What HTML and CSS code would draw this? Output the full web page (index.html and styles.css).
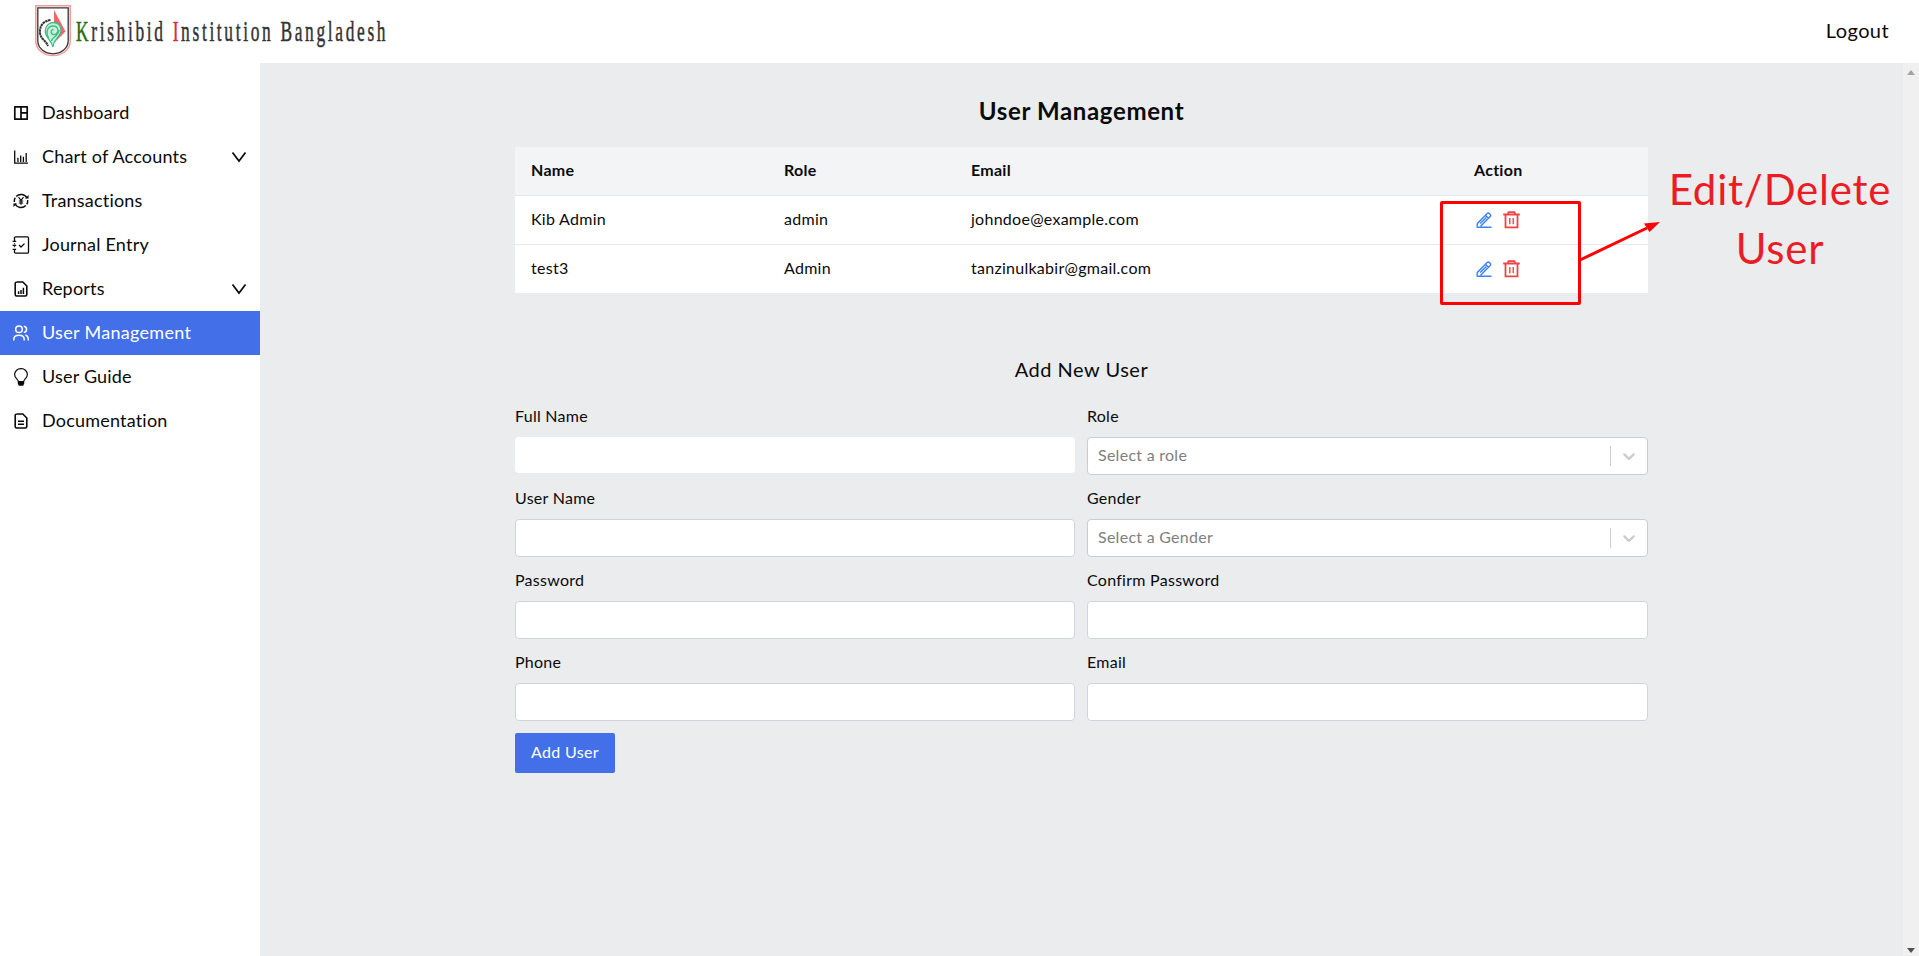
FILE: index.html
```
<!DOCTYPE html>
<html lang="en">
<head>
<meta charset="utf-8">
<title>User Management</title>
<link rel="stylesheet" href="styles.css">
</head>
<body>
<svg class="defs" aria-hidden="true">
  <symbol id="pen" viewBox="0 0 16 16"><g fill="none" stroke="currentColor" stroke-width="1.400"><path d="M.6 15.200h14.900M1 14.600l.4-3.200L11.200 1.600a1.500 1.500 0 0 1 2.100 0l.9.9a1.500 1.500 0 0 1 0 2.100L4.600 14.200M9.500 3.300l2.900 2.900M4.200 11.600l6.200-6.200"/></g></symbol>
  <symbol id="trash" viewBox="0 0 17 18"><g fill="none" stroke="currentColor" stroke-width="1.800"><path d="M.2 3.500h16.600M2.500 3.500v12.900h12V3.500M4.900 3.300l.6-2.200h6l.6 2.200"/><path d="M6.800 7v6.200M10.200 7v6.200" stroke-width="1.400"/></g></symbol>
  <symbol id="chev" viewBox="0 0 16 12"><path d="M1.500 1.500 8 10l6.500-8.500" fill="none" stroke="currentColor" stroke-width="1.700"/></symbol>
  <symbol id="select-chev" viewBox="0 0 20 20"><path d="M4.516 7.548c.436-.446 1.043-.481 1.576 0L10 11.295l3.908-3.747c.533-.481 1.141-.446 1.574 0 .436.445.408 1.197 0 1.615-.406.418-4.695 4.502-4.695 4.502a1.095 1.095 0 0 1-1.576 0S4.924 9.581 4.516 9.163s-.436-1.170 0-1.615z" fill="currentColor"/></symbol>
</svg>

<header class="topbar">
  <div class="brand">
    <svg class="crest" width="36" height="52" viewBox="0 0 36 52" fill="none">
      <path d="M.8.800h34.400V36c0 8.500-8 14.600-17.200 14.600S.800 44.500.800 36z" stroke="#f59a9a" stroke-width="1.500"/>
      <path d="M2.800 2.800h30.400v33c0 7.500-7 13-15.200 13s-15.200-5.500-15.200-13z" stroke="#333" stroke-width="1.300"/>
      <path d="M19 5l11.500 21.500L19 38z" fill="#f0666a"/>
      <path d="M17.800 42C16.500 35 10.300 33 10.300 26c0-5 3.500-8.500 8-8.500s7.700 3 7.700 7.500c0 7-7 8-8.200 17z" fill="#c9f0dd" stroke="#3dbb83" stroke-width="1.300"/>
      <path d="M13.500 33c-3-5-1.500-12 4.500-12 6 0 6.500 7 1.500 8.500-4 .5-4.500-5-1-5M16.500 36c0-4 7.500-5 7.500-11" stroke="#3dbb83" stroke-width="1.300"/>
      <path d="M15.500 15C8 16 4.500 21 5 28c.6 6 5.500 7 8 13" stroke="#333" stroke-width="2" stroke-dasharray="2.500 .5"/>
    </svg>
    <div class="wordmark"><span class="green">K</span>rishibid <span class="red">I</span>nstitution Bangladesh</div>
  </div>
  <a class="logout">Logout</a>
</header>

<div class="shell">
  <nav class="sidebar">
    <a class="item"><svg class="ico" viewBox="0 0 16 16"><path d="M1.800 1.800h12.400v12.400H1.800zM8 1.800v12.400M8 7.900h6.200" fill="none" stroke="currentColor" stroke-width="1.700" stroke-linejoin="round"/></svg><span>Dashboard</span></a>
    <a class="item"><svg class="ico" viewBox="0 0 16 16"><path d="M1.700 1.500v12.700H15M4.900 8.800V13M7.700 6.500V13M10.400 7.700V13M13.200 4V13" fill="none" stroke="currentColor" stroke-width="1.300"/></svg><span>Chart of Accounts</span><svg class="chev"><use href="#chev"/></svg></a>
    <a class="item"><svg class="ico" viewBox="0 0 16 16"><g fill="none" stroke="currentColor" stroke-width="1.400"><path d="M3.200 3.500A6.700 6.700 0 0 1 14 5.200M12.800 12.500A6.700 6.700 0 0 1 2 10.800M1.400 9A6.700 6.700 0 0 1 2.200 4.600M14.600 7a6.700 6.700 0 0 1-.8 4.400"/><path d="M5.500 4.200 8 7.400l2.500-3.200M8 7.400v4.400M5.800 8h4.400M5.800 10h4.400" stroke-width="1.200"/></g><path d="M12 5.500h3.600V2zM4 10.500H.4V14z" fill="currentColor"/></svg><span>Transactions</span></a>
    <a class="item"><svg class="ico big" viewBox="0 0 18 18"><g fill="none" stroke="currentColor" stroke-width="1.300"><path d="M2.500 5.500V2q0-1.200 1.200-1.200h11.600q1.200 0 1.200 1.200v14q0 1.200-1.200 1.200H3.700q-1.200 0-1.200-1.200v-2.800M2.500 7.300v1M2.500 10.200v1M.6 5.300h3.600M.6 9.300h3.600M.6 13.300h3.600"/><path d="m7 9 2 2 3.500-3.400"/></g></svg><span>Journal Entry</span></a>
    <a class="item"><svg class="ico" viewBox="0 0 16 16"><path d="M3.500 1h6.300l4 4v8.500q0 1.500-1.500 1.500H3.700q-1.500 0-1.500-1.500V2.500Q2.200 1 3.700 1z" fill="none" stroke="currentColor" stroke-width="1.600"/><path d="M5.600 13v-2.800M8 13V9M10.400 13V6.800" stroke="currentColor" stroke-width="1.500"/></svg><span>Reports</span><svg class="chev"><use href="#chev"/></svg></a>
    <a class="item active"><svg class="ico" viewBox="0 0 16 16"><g fill="none" stroke="currentColor" stroke-width="1.500"><circle cx="6" cy="4.300" r="3.300"/><path d="M.8 15.600v-1.400c0-2.500 2-4 5.200-4s5.200 1.500 5.200 4v1.400M10.800 1.200c3.700.4 3.700 5.800 0 6.200M12.400 10c2 .8 2.900 2 2.900 4.100v1.500"/></g></svg><span>User Management</span></a>
    <a class="item"><svg class="ico big" viewBox="0 0 18 18"><path d="M6.300 13.500c0-2.300-3.700-3.300-3.700-7A6.100 6.100 0 0 1 9 .7a6.100 6.100 0 0 1 6.400 5.800c0 3.700-3.700 4.700-3.700 7z" fill="none" stroke="currentColor" stroke-width="1.200"/><path d="M5.800 13.500h6.400v2l-1 2.200H6.800l-1-2.200z" fill="currentColor"/></svg><span>User Guide</span></a>
    <a class="item"><svg class="ico" viewBox="0 0 16 16"><path d="M3.500 1h6.300l4 4v8.500q0 1.500-1.500 1.500H3.700q-1.500 0-1.500-1.500V2.500Q2.200 1 3.700 1zM5 8.200h6M5 11.200h6" fill="none" stroke="currentColor" stroke-width="1.600"/></svg><span>Documentation</span></a>
  </nav>

  <main class="main">
    <div class="content">
      <h1>User Management</h1>
      <div class="table">
        <div class="row head"><span>Name</span><span>Role</span><span>Email</span><span>Action</span></div>
        <div class="row"><span>Kib Admin</span><span>admin</span><span>johndoe@example.com</span><span class="actions"><svg class="pen"><use href="#pen"/></svg><svg class="trash"><use href="#trash"/></svg></span></div>
        <div class="row"><span>test3</span><span>Admin</span><span>tanzinulkabir@gmail.com</span><span class="actions"><svg class="pen"><use href="#pen"/></svg><svg class="trash"><use href="#trash"/></svg></span></div>
      </div>
      <h2>Add New User</h2>
      <form class="form">
        <label>Full Name<span class="input plain"></span></label>
        <label>Role<span class="input select"><span>Select a role</span><i></i><svg><use href="#select-chev"/></svg></span></label>
        <label>User Name<span class="input"></span></label>
        <label>Gender<span class="input select"><span>Select a Gender</span><i></i><svg><use href="#select-chev"/></svg></span></label>
        <label>Password<span class="input"></span></label>
        <label>Confirm Password<span class="input"></span></label>
        <label>Phone<span class="input"></span></label>
        <label>Email<span class="input"></span></label>
        <button type="button" class="submit">Add User</button>
      </form>
    </div>
  </main>
  <div class="scrollbar">
    <svg width="8" height="5" viewBox="0 0 8 5"><path d="M0 5 4 0l4 5z" fill="#a3a3a3"/></svg>
    <svg width="8" height="5" viewBox="0 0 8 5"><path d="M0 0l4 5 4-5z" fill="#505050"/></svg>
  </div>
</div>

<div class="callout-box"></div>
<svg class="callout-arrow" width="82" height="44" viewBox="0 0 82 44"><path d="M1 40 68 8" stroke="#f00" stroke-width="3"/><path d="M81 2 70.500 12 65 3.500z" fill="#f00"/></svg>
<div class="callout-text">Edit/Delete<br>User</div>
</body>
</html>
```
FILE: styles.css
```
* { box-sizing: border-box; }
body {
  margin: 0;
  height: 956px;
  overflow: hidden;
  display: flex;
  flex-direction: column;
  background: #fff;
  color: #0a0a0a;
  font: 16px/24px Lato, "Open Sans", sans-serif;
  letter-spacing: .27px;
  position: relative;
}
.defs { position: absolute; width: 0; height: 0; }

.topbar {
  height: 63px;
  flex: none;
  display: flex;
  justify-content: space-between;
  padding: 0 30px 0 35px;
}
.brand { display: flex; padding-top: 5px; gap: 5px; }
.crest { flex: none; }
.wordmark {
  width: 311px;
  height: 52px;
  padding-top: 9px;
  font: 30px/34px "Liberation Serif", serif;
  letter-spacing: 4.58px;
  white-space: nowrap;
  color: #333;
  -webkit-text-stroke: .5px;
  transform: scaleX(.58);
  transform-origin: 0 0;
}
.green { color: #2c6a0c; }
.red { color: #d2323a; }
.logout { font-size: 20px; line-height: 60px; letter-spacing: .4px; }

.shell { flex: 1; display: flex; min-height: 0; }
.sidebar { width: 260px; flex: none; padding-top: 28px; }
.item {
  height: 44px;
  display: flex;
  align-items: center;
  gap: 13px;
  padding: 0 13px;
  font-size: 18px;
  letter-spacing: .2px;
}
.item span { padding-bottom: 2px; }
.item.active { background: #436fe9; color: #fff; letter-spacing: .3px; }
.ico { width: 16px; height: 16px; flex: none; }
.ico.big { width: 18px; height: 18px; margin: 0 -1px; }
.chev { width: 16px; height: 12px; margin-left: auto; }

.main { flex: 1; background: #ebecee; padding-top: 32px; }
.content { width: 1133px; margin: 0 auto; }
h1, h2 { margin: 0; text-align: center; }
h1 { font-size: 24px; line-height: 32px; font-weight: 700; letter-spacing: .65px; }
h2 { font-size: 20px; line-height: 28px; font-weight: 400; letter-spacing: .5px; margin: 62px 0 21px; }

.table { margin-top: 20px; background: #fff; }
.row {
  display: grid;
  grid-template-columns: 253px 187px 503px 1fr;
  padding: 11px 16px 13px;
  border-bottom: 1px solid #e5e7eb;
}
.row:last-child { height: 48px; border-bottom: 0; }
.head { background: #f3f4f6; font-weight: 700; }
.actions { display: flex; align-items: center; gap: 11px; padding: 2px 0 0 2px; }
.pen { width: 16px; height: 16px; color: #3b82f6; }
.trash { width: 17px; height: 18px; color: #ef4444; }

.form { display: grid; grid-template-columns: 560px 561px; gap: 12px; }
.form label { display: flex; flex-direction: column; gap: 9px; height: 71px; margin-bottom: -1px; }
.input {
  height: 38px;
  flex: none;
  background: #fff;
  border: 1px solid #d1d5db;
  border-radius: 4px;
}
.input.plain { height: 36px; border: 0; }
.select {
  display: flex;
  align-items: center;
  border-color: #ccc;
  color: #808080;
  padding: 0 8px 0 10px;
}
.select span { padding-bottom: 2px; }
.select i { width: 1px; height: 20px; background: #ccc; margin: 0 8px 0 auto; }
.select svg { width: 20px; height: 20px; color: #ccc; }
.submit {
  justify-self: start;
  width: 100px;
  height: 40px;
  margin-top: 1px;
  padding: 0 0 2px;
  border: 0;
  border-radius: 2px;
  background: #436fe9;
  color: #fff;
  font: inherit;
  letter-spacing: .35px;
}

.scrollbar {
  width: 16px;
  flex: none;
  background: #f0f0f0;
  display: flex;
  flex-direction: column;
  align-items: center;
  justify-content: space-between;
  padding: 7px 0 3px;
}

.callout-box {
  position: absolute;
  left: 1440px;
  top: 201px;
  width: 141px;
  height: 104px;
  border: 3px solid #f00;
  border-radius: 2px;
}
.callout-arrow { position: absolute; left: 1579px; top: 220px; }
.callout-text {
  position: absolute;
  left: 1660px;
  top: 160px;
  width: 240px;
  text-align: center;
  font-size: 42px;
  line-height: 59px;
  letter-spacing: .8px;
  color: #ed1c24;
}
```
